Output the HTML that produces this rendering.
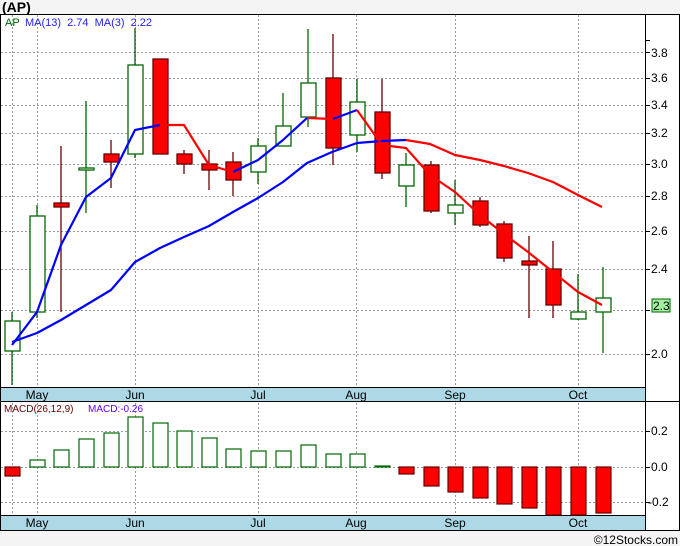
<!DOCTYPE html>
<html><head><style>
html,body{margin:0;padding:0;background:#f4f4f4;}
svg{display:block;font-family:"Liberation Sans",sans-serif;}
</style></head><body>
<svg width="680" height="546" xmlns="http://www.w3.org/2000/svg">
<rect x="0" y="0" width="680" height="546" fill="#f4f4f4"/>
<text x="2" y="12" font-size="14" font-weight="bold" fill="#000">(AP)</text>
<rect x="0.5" y="14.5" width="679" height="516" fill="#fff" stroke="#000"/>
<g stroke="#999" stroke-dasharray="2,2" stroke-width="1">
<line x1="1" y1="52.5" x2="645" y2="52.5"/><line x1="1" y1="78.5" x2="645" y2="78.5"/><line x1="1" y1="105.5" x2="645" y2="105.5"/><line x1="1" y1="133.5" x2="645" y2="133.5"/><line x1="1" y1="164.5" x2="645" y2="164.5"/><line x1="1" y1="196.5" x2="645" y2="196.5"/><line x1="1" y1="231.5" x2="645" y2="231.5"/><line x1="1" y1="269.5" x2="645" y2="269.5"/><line x1="1" y1="310.5" x2="645" y2="310.5"/><line x1="1" y1="354.5" x2="645" y2="354.5"/>
<line x1="1" y1="431.5" x2="645" y2="431.5"/><line x1="1" y1="467.5" x2="645" y2="467.5"/><line x1="1" y1="502.5" x2="645" y2="502.5"/>
<line x1="12.5" y1="15" x2="12.5" y2="515"/><line x1="37.5" y1="15" x2="37.5" y2="515"/><line x1="135.5" y1="15" x2="135.5" y2="515"/><line x1="258.5" y1="15" x2="258.5" y2="515"/><line x1="356.5" y1="15" x2="356.5" y2="515"/><line x1="455.5" y1="15" x2="455.5" y2="515"/><line x1="578.5" y1="15" x2="578.5" y2="515"/>
</g>
<g stroke-width="1.3">
<g stroke="#060"><line x1="12" y1="312" x2="12" y2="385"/><rect x="5" y="321" width="15" height="30" fill="#fff"/></g>
<g stroke="#060"><line x1="37" y1="205" x2="37" y2="318"/><rect x="30" y="216" width="15" height="96" fill="#fff"/></g>
<g stroke="#600"><line x1="61" y1="146" x2="61" y2="312"/><rect x="54" y="203" width="15" height="4" fill="#f00"/></g>
<g stroke="#060"><line x1="86" y1="101" x2="86" y2="213"/><rect x="79" y="168" width="15" height="2" fill="#fff"/></g>
<g stroke="#600"><line x1="111" y1="140" x2="111" y2="188"/><rect x="104" y="154" width="15" height="8" fill="#f00"/></g>
<g stroke="#060"><line x1="135" y1="28" x2="135" y2="158"/><rect x="128" y="65" width="15" height="89" fill="#fff"/></g>
<g stroke="#600"><line x1="160" y1="59" x2="160" y2="154"/><rect x="153" y="59" width="15" height="95" fill="#f00"/></g>
<g stroke="#600"><line x1="184" y1="150" x2="184" y2="174"/><rect x="177" y="154" width="15" height="10" fill="#f00"/></g>
<g stroke="#600"><line x1="209" y1="150" x2="209" y2="190"/><rect x="202" y="164" width="15" height="6" fill="#f00"/></g>
<g stroke="#600"><line x1="233" y1="152" x2="233" y2="196"/><rect x="226" y="162" width="15" height="18" fill="#f00"/></g>
<g stroke="#060"><line x1="258" y1="138" x2="258" y2="184"/><rect x="251" y="146" width="15" height="26" fill="#fff"/></g>
<g stroke="#060"><line x1="283" y1="93" x2="283" y2="146"/><rect x="276" y="126" width="15" height="20" fill="#fff"/></g>
<g stroke="#060"><line x1="308" y1="29" x2="308" y2="127"/><rect x="301" y="83" width="15" height="34" fill="#fff"/></g>
<g stroke="#600"><line x1="333" y1="34" x2="333" y2="165"/><rect x="326" y="78" width="15" height="70" fill="#f00"/></g>
<g stroke="#060"><line x1="357" y1="79" x2="357" y2="152"/><rect x="350" y="102" width="15" height="33" fill="#fff"/></g>
<g stroke="#600"><line x1="382" y1="79" x2="382" y2="179"/><rect x="375" y="112" width="15" height="61" fill="#f00"/></g>
<g stroke="#060"><line x1="406" y1="153" x2="406" y2="207"/><rect x="399" y="165" width="15" height="21" fill="#fff"/></g>
<g stroke="#600"><line x1="431" y1="161" x2="431" y2="213"/><rect x="424" y="165" width="15" height="46" fill="#f00"/></g>
<g stroke="#060"><line x1="455" y1="180" x2="455" y2="225"/><rect x="448" y="205" width="15" height="8" fill="#fff"/></g>
<g stroke="#600"><line x1="480" y1="197" x2="480" y2="227"/><rect x="473" y="201" width="15" height="24" fill="#f00"/></g>
<g stroke="#600"><line x1="504" y1="221" x2="504" y2="262"/><rect x="497" y="224" width="15" height="34" fill="#f00"/></g>
<g stroke="#600"><line x1="529" y1="236" x2="529" y2="318"/><rect x="522" y="261" width="15" height="4" fill="#f00"/></g>
<g stroke="#600"><line x1="553" y1="241" x2="553" y2="318"/><rect x="546" y="269" width="15" height="36" fill="#f00"/></g>
<g stroke="#060"><line x1="578" y1="274" x2="578" y2="320"/><rect x="571" y="312" width="15" height="7" fill="#fff"/></g>
<g stroke="#060"><line x1="603" y1="267" x2="603" y2="353"/><rect x="596" y="298" width="15" height="14" fill="#fff"/></g>
</g>
<g fill="none" stroke-width="2.2" stroke-linejoin="round">
<polyline stroke="#00f" points="12,342 37,333 61,320 86,305 111,290 135,262 160,248 184,237 209,226 233,212 258,198 283,182 307,163 332,152 357,143 382,141 406,140"/>
<polyline stroke="#f00" points="406,140 430,144 455,155 480,160 504,166 528,173 553,182 578,195 602,207"/>
<polyline stroke="#00f" points="12,345 37,312 61,245 86,197 111,178 135,130 160,125"/>
<polyline stroke="#f00" points="160,125 184,125 209,165 233,172"/>
<polyline stroke="#00f" points="233,172 258,160 283,140 307,118"/>
<polyline stroke="#f00" points="307,118 333,119"/>
<polyline stroke="#00f" points="333,119 357,110"/>
<polyline stroke="#f00" points="357,110 382,145 406,148 430,175 455,192 480,215 504,234 528,252 553,272 578,292 602,305"/>
</g>
<text x="5" y="26" font-size="11" fill="#060">AP</text>
<text x="25" y="26" font-size="11" fill="#22f" word-spacing="3">MA(13) 2.74 MA(3) 2.22</text>
<rect x="0.5" y="387.5" width="645" height="14" fill="#add8e6" stroke="#000"/>
<rect x="0.5" y="515.5" width="645" height="15" fill="#add8e6" stroke="#000"/>
<g font-size="12" fill="#000" text-anchor="middle">
<text x="37" y="399">May</text><text x="135" y="399">Jun</text><text x="258" y="399">Jul</text><text x="356" y="399">Aug</text><text x="455" y="399">Sep</text><text x="578" y="399">Oct</text>
<text x="37" y="527">May</text><text x="135" y="527">Jun</text><text x="258" y="527">Jul</text><text x="356" y="527">Aug</text><text x="455" y="527">Sep</text><text x="578" y="527">Oct</text>
</g>
<line x1="645.5" y1="14" x2="645.5" y2="531" stroke="#000"/>
<g font-size="12" fill="#000">
<text x="651" y="57">3.8</text><text x="651" y="82">3.6</text><text x="651" y="109">3.4</text><text x="651" y="137">3.2</text><text x="651" y="168">3.0</text><text x="651" y="200">2.8</text><text x="651" y="235">2.6</text><text x="651" y="273">2.4</text><text x="651" y="358">2.0</text>
<text x="651" y="435">0.2</text><text x="651" y="471">0.0</text><text x="648" y="506">-0.2</text>
</g>
<g stroke="#000">
<line x1="645" y1="40.5" x2="650" y2="40.5"/><line x1="645" y1="52.5" x2="650" y2="52.5"/><line x1="645" y1="78.5" x2="650" y2="78.5"/><line x1="645" y1="105.5" x2="650" y2="105.5"/><line x1="645" y1="133.5" x2="650" y2="133.5"/><line x1="645" y1="164.5" x2="650" y2="164.5"/><line x1="645" y1="196.5" x2="650" y2="196.5"/><line x1="645" y1="231.5" x2="650" y2="231.5"/><line x1="645" y1="269.5" x2="650" y2="269.5"/><line x1="645" y1="310.5" x2="650" y2="310.5"/><line x1="645" y1="354.5" x2="650" y2="354.5"/>
<line x1="645" y1="431.5" x2="650" y2="431.5"/><line x1="645" y1="467.5" x2="650" y2="467.5"/><line x1="645" y1="502.5" x2="650" y2="502.5"/>
</g>
<line x1="645" y1="401.5" x2="680" y2="401.5" stroke="#000"/>
<rect x="652" y="299" width="18" height="13" fill="#a0f0a0" stroke="#060"/>
<text x="653" y="310" font-size="12" fill="#000">2.3</text>
<text x="4" y="412" font-size="10" fill="#600">MACD(26,12,9)</text>
<text x="88" y="412" font-size="10" fill="#60f">MACD:-0.26</text>
<g stroke-width="1.2">
<rect x="5" y="467" width="15" height="9" fill="#f00" stroke="#600"/>
<g fill="#fff" stroke="#060">
<rect x="30" y="460" width="15" height="7"/><rect x="54" y="450" width="15" height="17"/><rect x="79" y="439" width="15" height="28"/><rect x="104" y="433" width="15" height="34"/><rect x="128" y="417" width="15" height="50"/><rect x="153" y="423" width="15" height="44"/><rect x="177" y="431" width="15" height="36"/><rect x="202" y="438" width="15" height="29"/><rect x="226" y="449" width="15" height="18"/><rect x="251" y="451" width="15" height="16"/><rect x="276" y="451" width="15" height="16"/><rect x="301" y="445" width="15" height="22"/><rect x="326" y="454" width="15" height="13"/><rect x="350" y="454" width="15" height="13"/><rect x="375" y="466" width="15" height="1"/>
</g>
<g fill="#f00" stroke="#600">
<rect x="399" y="467" width="15" height="7"/><rect x="424" y="467" width="15" height="19"/><rect x="448" y="467" width="15" height="25"/><rect x="473" y="467" width="15" height="31"/><rect x="497" y="467" width="15" height="37"/><rect x="522" y="467" width="15" height="41"/><rect x="546" y="467" width="15" height="48"/><rect x="571" y="467" width="15" height="48"/><rect x="596" y="467" width="15" height="46"/>
</g>
</g>
<rect x="0" y="531" width="680" height="15" fill="#f4f4f4"/>
<text x="678" y="544" font-size="12" fill="#000" text-anchor="end">©12Stocks.com</text>
</svg>
</body></html>
